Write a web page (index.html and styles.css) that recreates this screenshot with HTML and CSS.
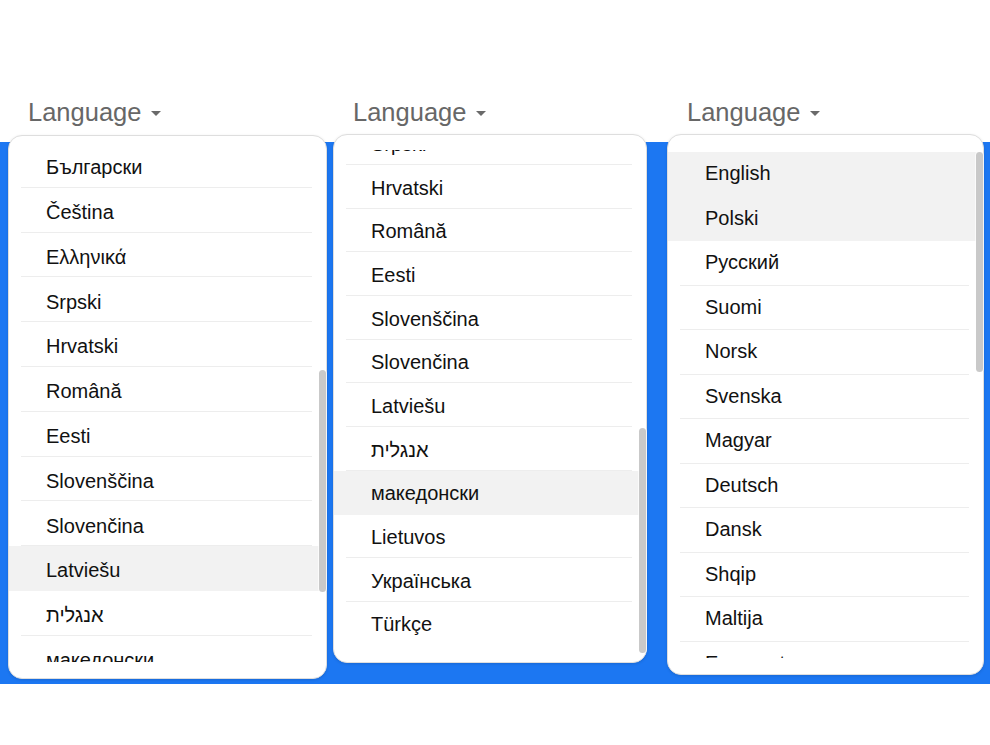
FILE: index.html
```html
<!DOCTYPE html>
<html>
<head>
    <meta charset="utf-8">
    <title>Language menus</title>
    <link rel="stylesheet" href="styles.css">
</head>
<body>

<div class="menus">

    <div class="col col-first">
        <div class="picker">Language <span class="caret"></span></div>
        <div class="menu menu-first">
            <div class="viewport">
                <ul class="options">
                    <li class="opt"><div class="opt-label">Български</div></li>
                    <li class="opt"><div class="opt-label">Čeština</div></li>
                    <li class="opt"><div class="opt-label">Ελληνικά</div></li>
                    <li class="opt"><div class="opt-label">Srpski</div></li>
                    <li class="opt"><div class="opt-label">Hrvatski</div></li>
                    <li class="opt"><div class="opt-label">Română</div></li>
                    <li class="opt"><div class="opt-label">Eesti</div></li>
                    <li class="opt"><div class="opt-label">Slovenščina</div></li>
                    <li class="opt"><div class="opt-label">Slovenčina</div></li>
                    <li class="opt active"><div class="opt-label">Latviešu</div></li>
                    <li class="opt"><div class="opt-label">אנגלית</div></li>
                    <li class="opt"><div class="opt-label">македонски</div></li>
                </ul>
            </div>
            <div class="thumb"></div>
        </div>
    </div>

    <div class="col col-second">
        <div class="picker">Language <span class="caret"></span></div>
        <div class="menu menu-second">
            <div class="viewport">
                <ul class="options">
                    <li class="opt"><div class="opt-label">Srpski</div></li>
                    <li class="opt"><div class="opt-label">Hrvatski</div></li>
                    <li class="opt"><div class="opt-label">Română</div></li>
                    <li class="opt"><div class="opt-label">Eesti</div></li>
                    <li class="opt"><div class="opt-label">Slovenščina</div></li>
                    <li class="opt"><div class="opt-label">Slovenčina</div></li>
                    <li class="opt"><div class="opt-label">Latviešu</div></li>
                    <li class="opt"><div class="opt-label">אנגלית</div></li>
                    <li class="opt active"><div class="opt-label">македонски</div></li>
                    <li class="opt"><div class="opt-label">Lietuvos</div></li>
                    <li class="opt"><div class="opt-label">Українська</div></li>
                    <li class="opt"><div class="opt-label">Türkçe</div></li>
                </ul>
            </div>
            <div class="thumb"></div>
        </div>
    </div>

    <div class="col col-third">
        <div class="picker">Language <span class="caret"></span></div>
        <div class="menu menu-third">
            <div class="viewport">
                <ul class="options">
                    <li class="opt active"><div class="opt-label">English</div></li>
                    <li class="opt active"><div class="opt-label">Polski</div></li>
                    <li class="opt"><div class="opt-label">Русский</div></li>
                    <li class="opt"><div class="opt-label">Suomi</div></li>
                    <li class="opt"><div class="opt-label">Norsk</div></li>
                    <li class="opt"><div class="opt-label">Svenska</div></li>
                    <li class="opt"><div class="opt-label">Magyar</div></li>
                    <li class="opt"><div class="opt-label">Deutsch</div></li>
                    <li class="opt"><div class="opt-label">Dansk</div></li>
                    <li class="opt"><div class="opt-label">Shqip</div></li>
                    <li class="opt"><div class="opt-label">Maltija</div></li>
                    <li class="opt"><div class="opt-label">Esperanto</div></li>
                </ul>
            </div>
            <div class="thumb"></div>
        </div>
    </div>

</div>

</body>
</html>
```

FILE: styles.css
```css
body, html {
    margin: 0;
    padding: 0;
    background-color: #fff;
    font-family: "Liberation Sans", "DejaVu Sans", Arial, sans-serif;
}

/* blue strip behind the three menus */
.menus {
    display: flex;
    align-items: flex-start;
    margin-top: 97px;
    padding-left: 8px;
    min-height: 587px;
    background: linear-gradient(to bottom,
        transparent 45px, #1c77f2 45px,
        #1c77f2 587px, transparent 587px);
}

.col-first {
    width: 319px;
}

.col-second {
    width: 314px;
    margin-left: 6px;
}

.col-third {
    width: 317px;
    margin-left: 20px;
}

.picker {
    height: 30px;
    line-height: 30px;
    padding-left: 20px;
    font-size: 25.5px;
    color: #676767;
}

.caret {
    display: inline-block;
    vertical-align: middle;
    margin-left: 2px;
    margin-top: -2px;
    border-left: 5px solid transparent;
    border-right: 5px solid transparent;
    border-top: 5px solid #6a6a6a;
}

.menu {
    position: relative;
    background-color: #fff;
    border: 1px solid #dedede;
    border-radius: 14px;
    box-shadow: 0px 1px 3px rgba(0, 0, 0, 0.12);
    margin-top: 7px;
}

.viewport {
    overflow: hidden;
}

.options {
    list-style: none;
    margin: 0;
    padding: 0;
}

.opt {
    padding: 0 14px 0 12px;
    font-size: 20px;
    color: #111;
}

.opt.active {
    background-color: #f2f2f2;
}

.opt-label {
    box-sizing: border-box;
    height: var(--row);
    padding: var(--pt) 0 var(--pb) 25px;
    line-height: calc(var(--row) - var(--pt) - var(--pb));
    border-bottom: 1px solid #ededed;
    white-space: nowrap;
}

.opt.active .opt-label {
    border-bottom-color: transparent;
}

.menu-first {
    --row: 44.8px;
    --pt: 5.3px;
    --pb: 0px;
    margin-top: 8px;
    padding: 7px 0 16px;
}

.menu-first .viewport {
    height: 519px;
}

.menu-second {
    --row: 43.7px;
    --pt: 2.5px;
    --pb: 0px;
    padding: 15px 0 17px;
}

.menu-second .viewport {
    height: 495px;
}

.menu-second .options {
    margin-top: -28.7px;
}

.menu-third {
    --row: 44.5px;
    --pt: 0px;
    --pb: 2px;
    padding: 17px 0 16.5px;
}

.menu-third .viewport {
    height: 505.5px;
}

/* overlay scrollbar thumb */
.thumb {
    position: absolute;
    right: 0;
    width: 7px;
    border-radius: 4px;
    background-color: #c9c9c9;
    box-shadow: 0px 0px 0px 1px rgba(255, 255, 255, 0.7);
}

.menu-first .thumb {
    top: 234px;
    height: 222px;
}

.menu-second .thumb {
    top: 293px;
    height: 225px;
}

.menu-third .thumb {
    top: 17px;
    height: 220px;
}
```
